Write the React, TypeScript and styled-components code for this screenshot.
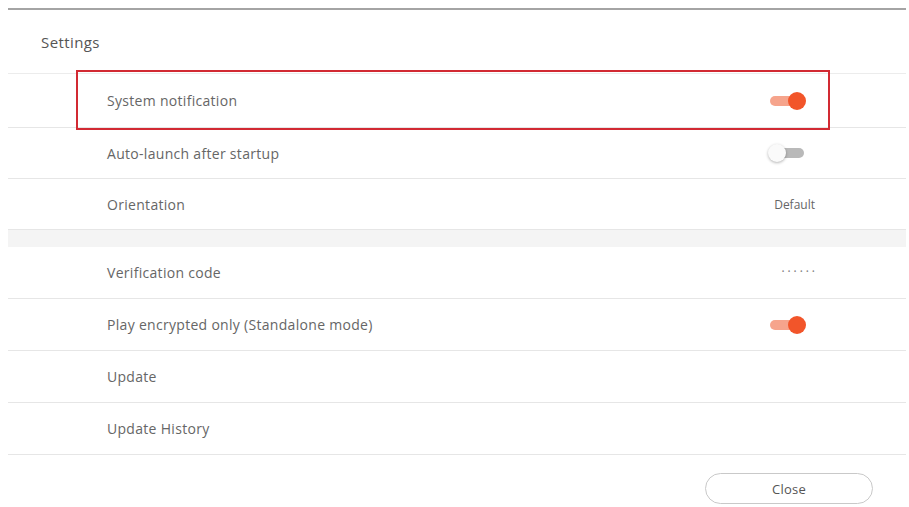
import styled, { createGlobalStyle } from 'styled-components'

const Global = createGlobalStyle`
  body {
    margin: 0;
    background: #fff;
    font-family: 'Open Sans', 'Noto Sans', sans-serif;
  }
`

const Panel = styled.div`
  margin: 8px 0 0 8px;
  width: 898px;
  border-top: 2px solid #a4a4a4;
`

const Title = styled.div`
  height: 63px;
  display: flex;
  align-items: center;
  padding-left: 33px;
  font-size: 15px;
  letter-spacing: 0.4px;
  color: #555;
`

const List = styled.div`
  border-top: 1px solid #ececec;
`

const Row = styled.div<{ tall?: boolean; short?: boolean }>`
  position: relative;
  height: ${(p) => (p.tall ? '53px' : p.short ? '50px' : '51px')};
  display: flex;
  align-items: center;
  justify-content: space-between;
  padding: 0 91px 0 99px;
  border-bottom: 1px solid #e6e6e6;
`

const Label = styled.span`
  font-size: 14px;
  letter-spacing: 0.3px;
  color: #666;
`

const Value = styled.span`
  font-size: 12px;
  color: #666;
`

const Dots = styled.span`
  font-size: 7px;
  letter-spacing: 3.4px;
  margin-right: -3px;
  margin-top: -3px;
  color: #888;
`

const Band = styled.div`
  height: 17px;
  background: #f4f4f4;
`

const Highlight = styled.div`
  position: absolute;
  left: 68px;
  right: 76px;
  top: -4px;
  height: 56px;
  border: 2px solid #d22a33;
  pointer-events: none;
`

const Switch = styled.span<{ on?: boolean }>`
  position: relative;
  width: 38px;
  height: 18px;
  margin-right: 9px;
  display: inline-block;

  &::before {
    content: '';
    position: absolute;
    left: 2px;
    right: 2px;
    top: 4px;
    height: 10px;
    border-radius: 5px;
    background: ${(p) => (p.on ? '#f6a48c' : '#b9b9b9')};
  }

  &::after {
    content: '';
    position: absolute;
    top: 0;
    width: 18px;
    height: 18px;
    border-radius: 50%;
    left: ${(p) => (p.on ? '20px' : '0')};
    background: ${(p) => (p.on ? '#f2552a' : '#fafafa')};
    box-shadow: ${(p) => (p.on ? 'none' : '0 1px 3px rgba(0,0,0,0.3)')};
  }
`

const Footer = styled.div`
  display: flex;
  justify-content: flex-end;
  padding: 18px 33px 0 0;
`

const CloseButton = styled.button`
  width: 168px;
  height: 31px;
  border: 1px solid #c9c9c9;
  border-radius: 16px;
  background: #fff;
  font-family: inherit;
  font-size: 13px;
  letter-spacing: 0.2px;
  color: #555;
  cursor: pointer;
`

export default function App() {
  return (
    <>
      <Global />
      <Panel>
        <Title>Settings</Title>
        <List>
          <Row tall>
            <Label>System notification</Label>
            <Switch on />
            <Highlight />
          </Row>
          <Row short>
            <Label>Auto-launch after startup</Label>
            <Switch />
          </Row>
          <Row short>
            <Label>Orientation</Label>
            <Value>Default</Value>
          </Row>
          <Band />
          <Row>
            <Label>Verification code</Label>
            <Dots>••••••</Dots>
          </Row>
          <Row>
            <Label>Play encrypted only (Standalone mode)</Label>
            <Switch on />
          </Row>
          <Row>
            <Label>Update</Label>
          </Row>
          <Row>
            <Label>Update History</Label>
          </Row>
        </List>
        <Footer>
          <CloseButton>Close</CloseButton>
        </Footer>
      </Panel>
    </>
  )
}
